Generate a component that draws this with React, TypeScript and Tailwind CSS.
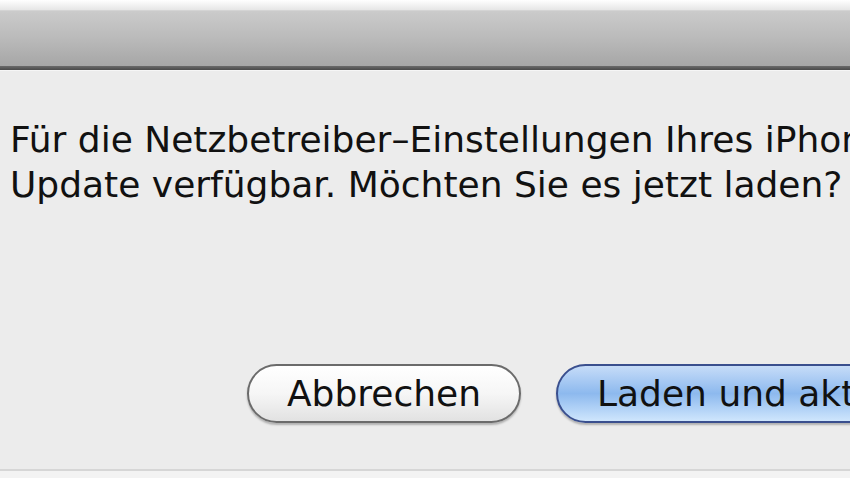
export default function App() {
  return (
    <div className="w-[850px] h-[478px] overflow-hidden flex flex-col bg-[#ececec]" style={{ fontFamily: '"DejaVu Sans", Verdana, sans-serif' }}>
      <div className="h-[10px] shrink-0 bg-gradient-to-b from-[#ffffff] to-[#e6e6e6]" />
      <div className="h-[56px] shrink-0 bg-gradient-to-b from-[#cbcbcb] via-[#bababa] to-[#a6a6a6] border-t border-[#d4d4d4]" />
      <div className="h-[4px] shrink-0 bg-gradient-to-b from-[#6a6a6a] to-[#4a4a4a]" />
      <div className="h-[1px] shrink-0 bg-[#f6f6f6]" />
      <div className="flex-1 flex flex-col">
        <div className="pt-[46px] pl-[10px] text-[36px] leading-[45px] text-[#111] whitespace-nowrap">
          <div>Für die Netzbetreiber–Einstellungen Ihres iPhones ist ein</div>
          <div>Update verfügbar. Möchten Sie es jetzt laden?</div>
        </div>
        <div className="mt-[157px] flex gap-[35px] pl-[247px] whitespace-nowrap">
          <div className="w-[274px] h-[59px] shrink-0 rounded-full border-2 border-[#6b6b6b] bg-gradient-to-b from-[#ffffff] via-[#f6f6f6] to-[#e2e2e2] shadow-[0_2px_2px_rgba(0,0,0,0.25)] flex items-center justify-center text-[36px] text-[#111]">
            Abbrechen
          </div>
          <div className="w-[420px] h-[59px] shrink-0 rounded-full border-2 border-[#3a4f8e] bg-gradient-to-b from-[#c6dcf8] via-[#8db9ee] to-[#cfe6fd] shadow-[0_2px_2px_rgba(0,0,0,0.25)] flex items-center pl-[39px] text-[36px] text-[#111]">
            Laden und aktualisieren
          </div>
        </div>
        <div className="mt-auto h-[2px] bg-[#d6d6d6]" />
        <div className="h-[7px] bg-[#f3f3f3]" />
      </div>
    </div>
  );
}
